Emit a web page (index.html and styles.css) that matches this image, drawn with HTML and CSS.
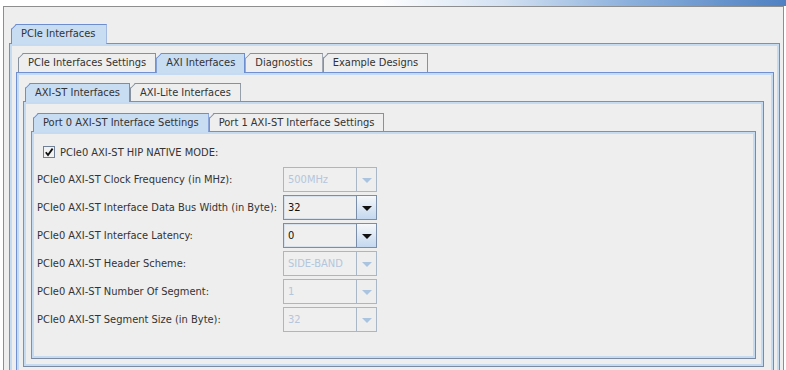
FILE: index.html
```html
<!DOCTYPE html>
<html lang="en">

<head>
  <meta charset="UTF-8">
  <title>PCIe Interfaces</title>
  <link rel="stylesheet" href="styles.css">
</head>

<body>
  <div class="titlebar"></div>

  <div class="frame">
    <div class="tabbar top">
      <span class="tab active">PCIe Interfaces</span>
    </div>
    <div class="panel l1">
      <div class="tabbar">
        <span class="tab">PCIe Interfaces Settings</span>
        <span class="tab active">AXI Interfaces</span>
        <span class="tab">Diagnostics</span>
        <span class="tab">Example Designs</span>
      </div>
      <div class="panel l2">
        <div class="tabbar">
          <span class="tab active">AXI-ST Interfaces</span>
          <span class="tab">AXI-Lite Interfaces</span>
        </div>
        <div class="panel l3">
          <div class="tabbar">
            <span class="tab active">Port 0 AXI-ST Interface Settings</span>
            <span class="tab">Port 1 AXI-ST Interface Settings</span>
          </div>
          <div class="panel l4">
            <label class="check-row">
              <span class="checkbox">
                <svg width="10" height="10" viewBox="0 0 10 10">
                  <path d="M1.8 5.2 L4 8 L8.6 1.6" fill="none" stroke="#111" stroke-width="1.8" />
                </svg>
              </span>
              PCIe0 AXI-ST HIP NATIVE MODE:
            </label>

            <div class="fields">
              <span class="label">PCIe0 AXI-ST Clock Frequency (in MHz):</span>
              <div class="combo disabled"><span class="value">500MHz</span><span class="arrow"></span></div>

              <span class="label">PCIe0 AXI-ST Interface Data Bus Width (in Byte):</span>
              <div class="combo"><span class="value">32</span><span class="arrow"></span></div>

              <span class="label">PCIe0 AXI-ST Interface Latency:</span>
              <div class="combo"><span class="value">0</span><span class="arrow"></span></div>

              <span class="label">PCIe0 AXI-ST Header Scheme:</span>
              <div class="combo disabled"><span class="value">SIDE-BAND</span><span class="arrow"></span></div>

              <span class="label">PCIe0 AXI-ST Number Of Segment:</span>
              <div class="combo disabled"><span class="value">1</span><span class="arrow"></span></div>

              <span class="label">PCIe0 AXI-ST Segment Size (in Byte):</span>
              <div class="combo disabled"><span class="value">32</span><span class="arrow"></span></div>
            </div>
          </div>
        </div>
      </div>
    </div>
  </div>
</body>

</html>
```

FILE: styles.css
```css
html,
body {
  margin: 0;
  height: 370px;
  overflow: hidden;
  background: #ffffff;
}

body {
  font-family: "DejaVu Sans Condensed", "DejaVu Sans", sans-serif;
  font-stretch: condensed;
  font-size: 11px;
  color: #333333;
}

.titlebar {
  height: 6px;
  background: linear-gradient(to right, #ffffff 0%, #ffffff 48%, #d3e1f2 64%, #8bb0dc 80%, #4f80c2 100%);
}

.frame {
  margin: 0 2px 0 3px;
  height: 380px;
  border: 1px solid #8e8e8e;
  border-bottom: none;
  background: #eeeeee;
  padding: 17px 3px 0 5px;
}

/* tabs */
.tabbar {
  display: flex;
  align-items: flex-end;
  padding-left: 2px;
  position: relative;
  z-index: 1;
}

.tab {
  position: relative;
  height: 18px;
  box-sizing: border-box;
  padding: 0 9px;
  border: 1px solid #87909c;
  border-bottom: none;
  background: #eeeeee;
  line-height: 17px;
  white-space: nowrap;
  clip-path: polygon(5px 0, 100% 0, 100% 100%, 0 100%, 0 5px);
}

.tab::before {
  content: "";
  position: absolute;
  left: -1px;
  top: 4px;
  width: 7px;
  height: 1px;
  background: #87909c;
  transform-origin: 0 0;
  transform: rotate(-45deg);
}

.tab.active {
  height: 19px;
  margin-bottom: -1px;
  background: #c8dcf2;
  border-color: #6c8ecf;
}

.tab.active::before {
  background: #6c8ecf;
}

.tabbar.top .tab,
.l1 > .tabbar .tab {
  height: 19px;
  line-height: 18px;
}

.tabbar.top .tab.active,
.l1 > .tabbar .tab.active {
  height: 20px;
}

.tabbar.top .tab {
  padding: 0 10px 0 9px;
}

/* panels */
.panel {
  border: 1px solid;
  border-color: #6f91d2 #7b8aa0 #7b8aa0 #6f91d2;
  box-shadow: inset 0 0 0 2px #c6dbf1;
  background: #eeeeee;
}

.l1 {
  height: 400px;
  padding: 9px 5px 0 6px;
}

.l2 {
  height: 400px;
  padding: 10px 9px 0 6px;
}

.l3 {
  padding: 11px 7px 7px 7px;
}

.l4 {
  height: 212px;
  padding: 14px 0 0 5px;
}

/* form */
.check-row {
  display: flex;
  align-items: center;
  gap: 5px;
  margin-left: 6px;
  height: 12px;
}

.checkbox {
  width: 12px;
  height: 12px;
  box-sizing: border-box;
  border: 1px solid #6f7f95;
  background: #f2f2f2;
  display: flex;
  align-items: center;
  justify-content: center;
}

.fields {
  display: grid;
  grid-template-columns: 246px 94px;
  row-gap: 3px;
  margin-top: 9px;
  align-items: center;
}

.combo {
  display: flex;
  height: 25px;
  box-sizing: border-box;
  border: 1px solid #7b8ea9;
  box-shadow: inset 0 0 0 1px #d9e1ea;
  background: #efefef;
  color: #111111;
}

.combo .value {
  flex: 1;
  padding-left: 4px;
  line-height: 23px;
}

.combo .arrow {
  width: 19px;
  border-left: 1px solid #7b8ea9;
  background: linear-gradient(#f6f8fb, #c3d8ef);
  display: flex;
  align-items: center;
  justify-content: center;
}

.combo .arrow::after {
  content: "";
  border-left: 5px solid transparent;
  border-right: 5px solid transparent;
  border-top: 5px solid #111111;
  margin-top: 1px;
}

.combo.disabled {
  border-color: #a9b6c6;
  box-shadow: none;
  color: #b4c6dc;
}

.combo.disabled .arrow {
  border-left-color: #a9b6c6;
  background: #eeeeee;
}

.combo.disabled .arrow::after {
  border-top-color: #aac4e0;
}
```
